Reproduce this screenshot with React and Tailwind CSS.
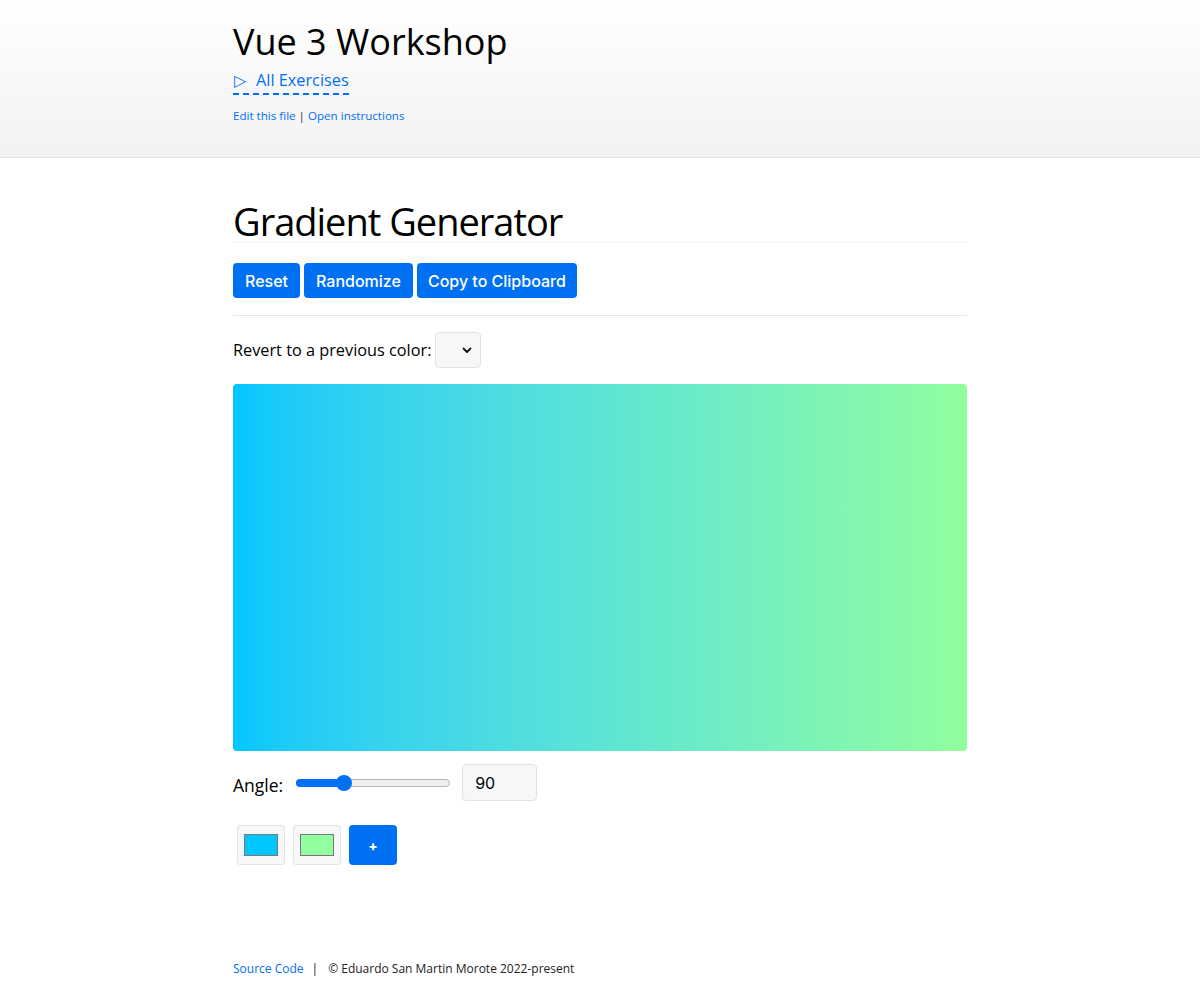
import React from "react";

const sans = { fontFamily: '"Open Sans", "Noto Sans", sans-serif' };

export default function App() {
  return (
    <div className="min-h-[1000px] bg-white text-black" style={sans}>
      <header className="h-[158px] border-b border-[#e3e3e3] bg-gradient-to-b from-white to-[#f2f2f2]">
        <div className="mx-auto w-[734px] pt-[17px]">
          <h1 className="text-[36px] leading-[50px] font-normal">Vue 3 Workshop</h1>
          <div className="mt-[1px]">
            <span className="inline-block border-b-2 border-dashed border-[#0070f3] pb-[2px] text-[16.3px] leading-[22px] text-[#0070f3]">
              <span className="ml-[1px] mr-[10px] text-[16px]">▷</span>All Exercises
            </span>
          </div>
          <div className="mt-[13px] text-[11.6px] leading-[16px] text-[#333]">
            <a className="text-[#0070f3]">Edit this file</a> | <a className="text-[#0070f3]">Open instructions</a>
          </div>
        </div>
      </header>

      <main className="mx-auto w-[734px] pt-[42px]">
        <h2 className="border-b border-[#f3f3f3] text-[38px] leading-[42px] tracking-[-1px] font-normal">Gradient Generator</h2>
        <div className="mt-[20px] flex gap-[4px] pb-[17px] border-b border-[#e5e5e5]" style={{ fontFamily: 'Inter, "Liberation Sans", sans-serif' }}>
          <button className="h-[35px] rounded-[4px] bg-[#0070f3] px-[12px] text-[16px] font-medium text-white">Reset</button>
          <button className="h-[35px] rounded-[4px] bg-[#0070f3] px-[12px] text-[16px] font-medium text-white">Randomize</button>
          <button className="h-[35px] rounded-[4px] bg-[#0070f3] px-[11px] text-[16px] font-medium text-white">Copy to Clipboard</button>
        </div>
        <div className="mt-[16px] flex items-center text-[16.3px]">
          <span>Revert to a previous color:</span>
          <div className="ml-[4px] flex h-[36px] w-[46px] items-center justify-end rounded-[4px] border border-[#e3e3e3] bg-[#f6f7f9] pr-[8px]">
            <svg width="10" height="7" viewBox="0 0 10 7"><path d="M1.5 1.5 L5 5 L8.5 1.5" fill="none" stroke="#111" strokeWidth="1.8" strokeLinecap="round" strokeLinejoin="round" /></svg>
          </div>
        </div>
        <div className="mt-[16px] h-[367px] w-full rounded-[4px] bg-gradient-to-r from-[#00c6ff] to-[#92fe9d]" />
        <div className="mt-[13px] flex items-center">
          <span className="text-[17.5px] mt-[6px]">Angle:</span>
          <div className="relative ml-[13px] h-[16px] w-[154px]">
            <div className="absolute left-0 right-0 top-[4px] h-[8px] rounded-full border border-[#b5b5b5] bg-[#efefef]" />
            <div className="absolute left-0 top-[4px] h-[8px] w-[50px] rounded-full bg-[#0070f3]" />
            <div className="absolute left-[40px] top-0 h-[16px] w-[16px] rounded-full bg-[#0070f3]" />
          </div>
          <div className="ml-[12px] flex h-[37px] w-[75px] items-center rounded-[4px] border border-[#e3e3e3] bg-[#f6f7f9] pl-[12px] text-[16px]" style={{ fontFamily: 'Inter, sans-serif' }}>90</div>
        </div>
        <div className="mt-[24px] flex gap-[8px] pl-[4px]">
          <div className="flex h-[40px] w-[48px] items-center justify-center rounded-[3px] border border-[#e3e3e3] bg-[#f6f7f9]">
            <div className="h-[22px] w-[34px] border border-[#777] bg-[#00c6ff]" />
          </div>
          <div className="flex h-[40px] w-[48px] items-center justify-center rounded-[3px] border border-[#e3e3e3] bg-[#f6f7f9]">
            <div className="h-[22px] w-[34px] border border-[#777] bg-[#92fe9d]" />
          </div>
          <button className="h-[40px] w-[48px] rounded-[4px] bg-[#0070f3] text-[14px] font-bold text-white" style={{ fontFamily: 'Inter, sans-serif' }}>+</button>
        </div>
      </main>

      <footer className="mx-auto mt-[95px] w-[734px] text-[12px] text-[#222]">
        <a className="text-[#0070f3]">Source Code</a>
        <span className="mx-[8px]">|</span>
        <span className="ml-[2px]">© Eduardo San Martin Morote 2022-present</span>
      </footer>
    </div>
  );
}
